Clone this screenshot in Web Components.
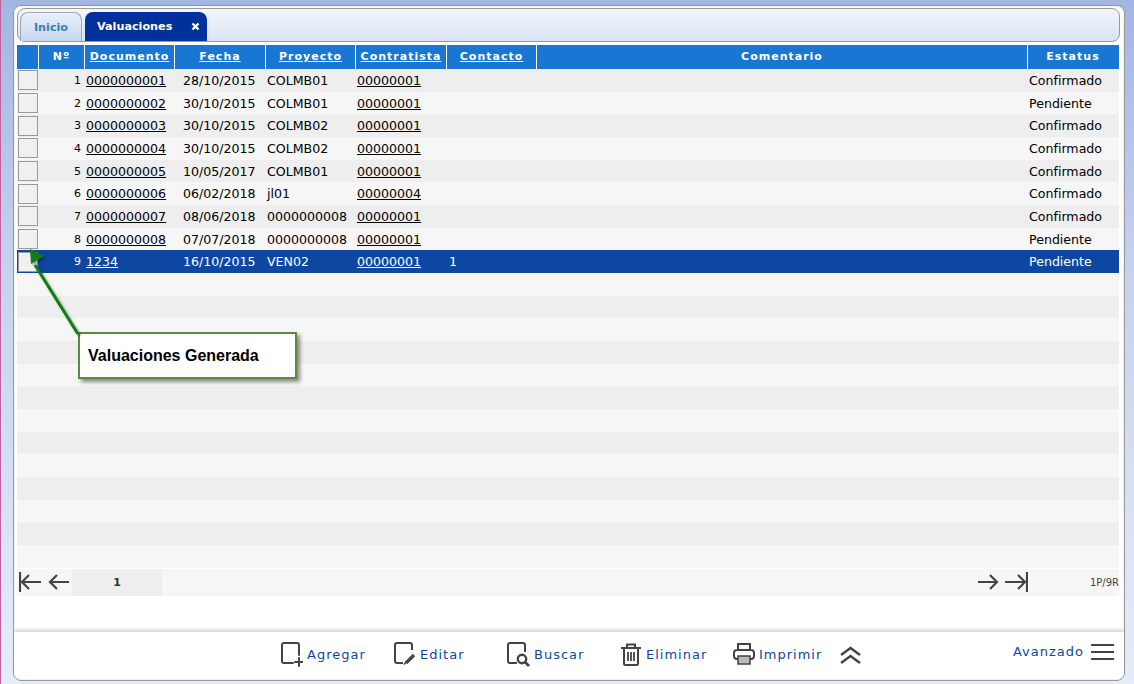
<!DOCTYPE html>
<html lang="es">
<head>
<meta charset="utf-8">
<title>Valuaciones</title>
<style>
    html, body { margin: 0; height: 684px; overflow: hidden; }
    body {
        box-sizing: border-box;
        border-left: 1px solid #c0609e;
        padding: 5px 9px 3px 12px;
        background: linear-gradient(to bottom, #a3b6e2 0%, #c6d2ee 40%, #e6ecf8 100%);
        font-family: "DejaVu Sans", Verdana, sans-serif;
    }
</style>
</head>
<body>
<app-shell>
    <tab-strip></tab-strip>
    <data-grid></data-grid>
    <pager-bar></pager-bar>
    <action-bar></action-bar>
    <callout-note>Valuaciones Generada</callout-note>
</app-shell>

<script>
class AppShell extends HTMLElement {
    constructor() {
        super();
        this.attachShadow({ mode: 'open' }).innerHTML = `
            <style>
                :host {
                    display: flex;
                    flex-direction: column;
                    box-sizing: border-box;
                    position: relative;
                    height: 676px;
                    padding: 2px 5px 5px 3px;
                    background: #fff;
                    border: 1px solid #999;
                    border-radius: 8px;
                    box-shadow: inset 0 0 0 1px #eef3fa;
                }
            </style>
            <slot></slot>
        `;
    }
}

class TabStrip extends HTMLElement {
    constructor() {
        super();
        this.attachShadow({ mode: 'open' }).innerHTML = `
            <style>
                :host {
                    display: flex;
                    align-items: flex-end;
                    gap: 3px;
                    box-sizing: border-box;
                    height: 34px;
                    margin-right: -1px;
                    padding: 0 0 0 2px;
                    border: 1px solid #999;
                    border-radius: 8px;
                    background: linear-gradient(to bottom, #f3f6fc, #d8e3f4);
                    font: bold 11.2px "DejaVu Sans", sans-serif;
                }
                .tab {
                    display: flex;
                    align-items: center;
                    box-sizing: border-box;
                    height: 29px;
                    border-radius: 8px 8px 0 0;
                }
                .idle {
                    width: 62px;
                    justify-content: center;
                    border: 1px solid #a0a8b4;
                    border-bottom: 0;
                    color: #3a7fb0;
                    background: linear-gradient(to bottom, #e8eff9, #c8d8ee);
                }
                .active {
                    width: 122px;
                    padding: 0 7px 0 12px;
                    justify-content: space-between;
                    color: #fff;
                    background: #00309a;
                }
                .close { width: 9px; height: 9px; }
            </style>
            <div class="tab idle">Inicio</div>
            <div class="tab active">
                <span>Valuaciones</span>
                <svg class="close" viewBox="0 0 9 9"><path d="M1.5 1.5l6 6M7.5 1.5l-6 6" stroke="#fff" stroke-width="2.4" fill="none"/></svg>
            </div>
        `;
    }
}

const GRID_COLUMNS = '22px 46px 90px 91px 90px 91px 90px 491px 90px';

const GRID_HEADERS = [
    ['', false], ['Nº', false], ['Documento', true], ['Fecha', true], ['Proyecto', true],
    ['Contratista', true], ['Contacto', true], ['Comentario', false], ['Estatus', false]
];

const GRID_ROWS = [
    ['1', '0000000001', '28/10/2015', 'COLMB01', '00000001', '', 'Confirmado'],
    ['2', '0000000002', '30/10/2015', 'COLMB01', '00000001', '', 'Pendiente'],
    ['3', '0000000003', '30/10/2015', 'COLMB02', '00000001', '', 'Confirmado'],
    ['4', '0000000004', '30/10/2015', 'COLMB02', '00000001', '', 'Confirmado'],
    ['5', '0000000005', '10/05/2017', 'COLMB01', '00000001', '', 'Confirmado'],
    ['6', '0000000006', '06/02/2018', 'jl01', '00000004', '', 'Confirmado'],
    ['7', '0000000007', '08/06/2018', '0000000008', '00000001', '', 'Confirmado'],
    ['8', '0000000008', '07/07/2018', '0000000008', '00000001', '', 'Pendiente'],
    ['9', '1234', '16/10/2015', 'VEN02', '00000001', '1', 'Pendiente']
];

const SELECTED_ROW = 8;
const TOTAL_ROWS = 22;

class DataGrid extends HTMLElement {
    constructor() {
        super();
        this.attachShadow({ mode: 'open' });
    }

    connectedCallback() {
        const head = GRID_HEADERS.map(([label, link]) =>
            `<div class="th">${link ? `<u>${label}</u>` : label}</div>`).join('');

        let rows = '';
        for (let i = 0; i < TOTAL_ROWS; i++) {
            const data = GRID_ROWS[i];
            const classes = ['row', i % 2 ? 'even' : 'odd', i === SELECTED_ROW ? 'selected' : ''].join(' ');
            if (!data) {
                rows += `<div class="${classes}"></div>`;
                continue;
            }
            rows += `
                <div class="${classes}">
                    <div class="check"></div>
                    <div class="num">${data[0]}</div>
                    <div class="cell"><u>${data[1]}</u></div>
                    <div class="cell date">${data[2]}</div>
                    <div class="cell">${data[3]}</div>
                    <div class="cell"><u>${data[4]}</u></div>
                    <div class="cell contact">${data[5]}</div>
                    <div class="cell"></div>
                    <div class="cell">${data[6]}</div>
                </div>`;
        }

        this.shadowRoot.innerHTML = `
            <style>
                :host {
                    display: block;
                    margin-top: 3px;
                    color: #000;
                    font: 12.6px "DejaVu Sans", sans-serif;
                }
                .head, .row {
                    display: grid;
                    grid-template-columns: ${GRID_COLUMNS};
                    align-items: center;
                }
                .head {
                    height: 24px;
                    background: #1976d2;
                    color: #fff;
                    font-weight: bold;
                    font-size: 11px;
                    letter-spacing: 1px;
                }
                .th {
                    height: 100%;
                    line-height: 24px;
                    text-align: center;
                    border-right: 1px solid #fff;
                    box-sizing: border-box;
                }
                .th:last-child { border-right: 0; }
                .row { height: 22.68px; white-space: nowrap; }
                .odd { background: #eeeeee; }
                .even { background: #f6f6f6; }
                .selected { background: #0d47a1; color: #fff; }
                .check {
                    box-sizing: border-box;
                    width: 20px;
                    height: 20px;
                    margin-left: 1px;
                    background: #f0f0f0;
                    border: 1px solid #999;
                }
                .num { text-align: right; padding-right: 4px; font-size: 11px; }
                .cell { padding-left: 1px; }
                .date { padding-left: 8px; }
                .contact { padding-left: 2px; }
            </style>
            <div class="head">${head}</div>
            ${rows}
        `;
    }
}

const arrowIcon = (d, width) =>
    `<svg width="${width}" height="20" viewBox="0 0 ${width} 20"><path d="${d}" fill="none" stroke="#444" stroke-width="2.2"/></svg>`;

class PagerBar extends HTMLElement {
    constructor() {
        super();
        this.attachShadow({ mode: 'open' }).innerHTML = `
            <style>
                :host {
                    display: flex;
                    align-items: center;
                    height: 27px;
                    margin-top: 1px;
                    background: #f6f6f6;
                    color: #444;
                    font: 10px "DejaVu Sans", sans-serif;
                }
                .nav { display: flex; align-items: center; gap: 6px; }
                .first { width: 53px; padding-left: 2px; }
                .page {
                    width: 90px;
                    height: 100%;
                    line-height: 27px;
                    text-align: center;
                    background: #eeeeee;
                    color: #333;
                    font-weight: bold;
                    font-size: 11px;
                }
                .last { margin-left: auto; gap: 6px; }
                .info { width: 91px; text-align: right; padding-right: 0; }
                svg { display: block; }
            </style>
            <div class="nav first">
                ${arrowIcon('M1 0V20M22 10H3M10 3L3 10l7 7', 23)}
                ${arrowIcon('M21 10H2M9 3L2 10l7 7', 21)}
            </div>
            <div class="page">1</div>
            <div class="nav last">
                ${arrowIcon('M0 10H19M12 3l7 7-7 7', 21)}
                ${arrowIcon('M0 10H20M13 3l7 7-7 7M22 0V20', 23)}
            </div>
            <div class="info">1P/9R</div>
        `;
    }
}

class ActionItem extends HTMLElement {
    constructor() {
        super();
        this.attachShadow({ mode: 'open' }).innerHTML = `
            <style>
                :host {
                    display: flex;
                    align-items: center;
                    gap: 4px;
                    width: var(--item-width, 113px);
                    color: #0d47a1;
                    font: 13px "DejaVu Sans", sans-serif;
                    letter-spacing: 1px;
                    white-space: nowrap;
                }
                ::slotted(svg) { display: block; flex: none; }
            </style>
            <slot name="icon"></slot>
            <slot></slot>
        `;
    }
}

class ActionBar extends HTMLElement {
    constructor() {
        super();
        this.attachShadow({ mode: 'open' }).innerHTML = `
            <style>
                :host {
                    display: flex;
                    align-items: center;
                    box-sizing: border-box;
                    height: 44px;
                    margin: auto -5px 0 -3px;
                    padding: 1px 10px 0 267px;
                    border-top: 1px solid #ddd;
                    box-shadow: 0 -3px 3px -1px rgba(0, 0, 0, .14);
                    background: #fff;
                }
                .imprimir { --item-width: 106px; }
                .chevrons { display: block; margin-top: 1px; }
                .advanced { margin-left: auto; --item-width: auto; gap: 7px; margin-top: -5px; }
                .hamburger { display: block; }
                svg { fill: none; stroke: #444; stroke-width: 2; }
            </style>
            <action-item>
                <svg slot="icon" width="22" height="26" viewBox="0 0 22 26"><path d="M18 14V4a2 2 0 0 0-2-2H3a2 2 0 0 0-2 2v16a2 2 0 0 0 2 2h9M18 17v8M14 21h8" stroke-linecap="round"/></svg>
                Agregar
            </action-item>
            <action-item>
                <svg slot="icon" width="22" height="26" viewBox="0 0 22 26"><path d="M18 9V4a2 2 0 0 0-2-2H3a2 2 0 0 0-2 2v16a2 2 0 0 0 2 2h6"/><path d="M20 14l-8 8" stroke-width="3.4"/><path d="M12 21l-2 2.5" stroke-width="1.5"/></svg>
                Editar
            </action-item>
            <action-item>
                <svg slot="icon" width="23" height="26" viewBox="0 0 23 26"><path d="M18 11V4a2 2 0 0 0-2-2H3a2 2 0 0 0-2 2v16a2 2 0 0 0 2 2h7"/><circle cx="15" cy="18" r="4.2" stroke-width="2.4"/><path d="M18 21l4 4" stroke-width="2.6"/></svg>
                Buscar
            </action-item>
            <action-item>
                <svg slot="icon" width="22" height="26" viewBox="0 0 22 26"><path d="M1 7h20M7 7V3.5h8V7M4 7v15.5a1.5 1.5 0 0 0 1.5 1.5h11a1.5 1.5 0 0 0 1.5-1.5V7"/><path d="M8 11v9M11 11v9M14 11v9" stroke-width="1.8"/></svg>
                Eliminar
            </action-item>
            <action-item class="imprimir">
                <svg slot="icon" width="22" height="26" viewBox="0 0 22 26"><path d="M5 9V3h12v6M5 18H4a3 3 0 0 1-3-3v-3a3 3 0 0 1 3-3h14a3 3 0 0 1 3 3v3a3 3 0 0 1-3 3h-1"/><path d="M5 15h12v8H5z" fill="#bbb" stroke="#444" stroke-width="1.6"/></svg>
                Imprimir
            </action-item>
            <svg class="chevrons" width="23" height="20" viewBox="0 0 23 20"><path d="M2 10l9.500-7 9.500 7M2 18l9.500-7 9.500 7" stroke-width="2.4"/></svg>
            <action-item class="advanced">
                Avanzado
                <svg class="hamburger" slot="" width="23" height="18" viewBox="0 0 23 18" fill="none" stroke="#444" stroke-width="2.2"><path d="M0 2h23M0 9h23M0 16h23"/></svg>
            </action-item>
        `;
    }
}

class CalloutNote extends HTMLElement {
    constructor() {
        super();
        this.attachShadow({ mode: 'open' }).innerHTML = `
            <style>
                :host {
                    position: absolute;
                    left: 64px;
                    top: 326px;
                    display: block;
                    box-sizing: border-box;
                    width: 219px;
                    height: 47px;
                    padding-left: 8px;
                    line-height: 43px;
                    background: #fff;
                    border: 2px solid #5a8a3c;
                    box-shadow: 3px 3px 4px rgba(0, 0, 0, .45);
                    color: #000;
                    font: bold 16px/43px "Liberation Sans", Arial, sans-serif;
                    white-space: nowrap;
                }
                svg {
                    position: absolute;
                    left: -66px;
                    top: -86px;
                    overflow: visible;
                    filter: drop-shadow(2px 2px 1px rgba(0, 0, 0, .35));
                }
            </style>
            <svg width="66" height="86" viewBox="0 0 66 86">
                <path d="M64 86L21 17" stroke="#0f7f12" stroke-width="3" fill="none"/>
                <path d="M16 1L17 16L30 8z" fill="#0f7f12"/>
            </svg>
            <slot></slot>
        `;
    }
}

customElements.define('app-shell', AppShell);
customElements.define('tab-strip', TabStrip);
customElements.define('data-grid', DataGrid);
customElements.define('pager-bar', PagerBar);
customElements.define('action-item', ActionItem);
customElements.define('action-bar', ActionBar);
customElements.define('callout-note', CalloutNote);
</script>
</body>
</html>
